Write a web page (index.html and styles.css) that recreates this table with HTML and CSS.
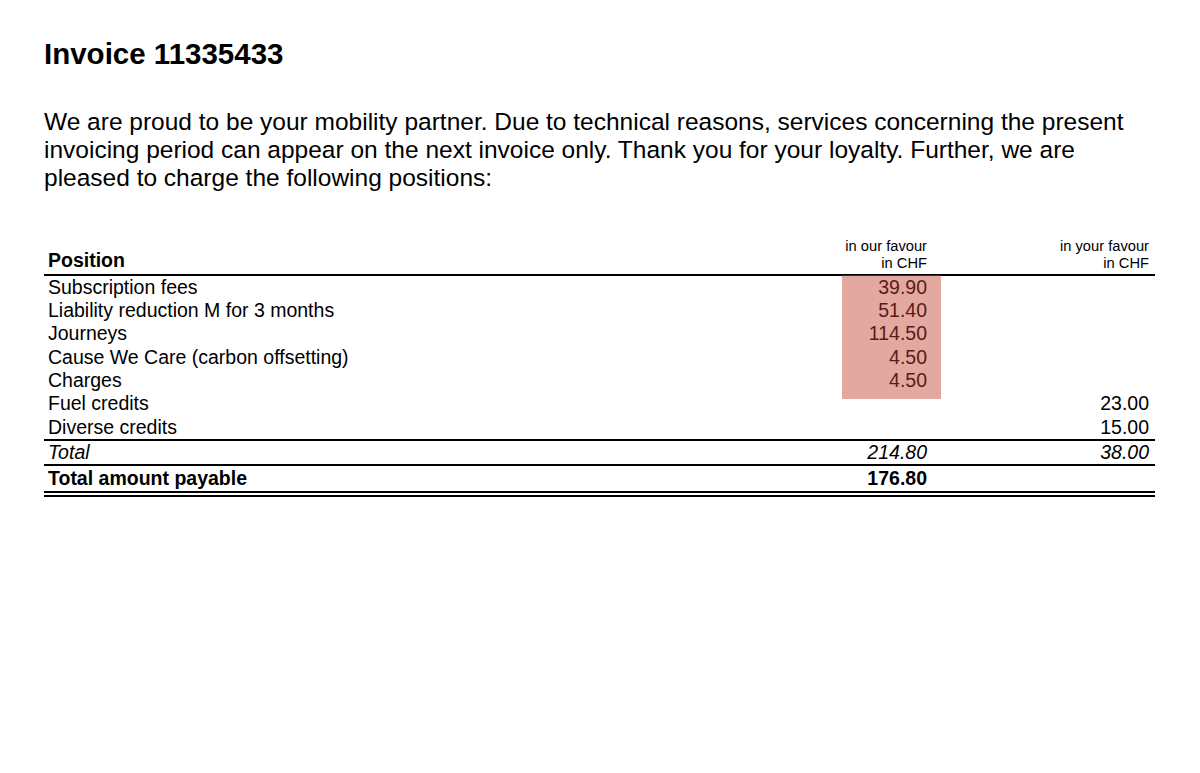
FILE: index.html
```html
<!DOCTYPE html>
<html lang="en">
<head>
<meta charset="utf-8">
<title>Invoice 11335433</title>
<link rel="stylesheet" href="styles.css">
</head>
<body>
<main class="page">
  <h1 class="title">Invoice 11335433</h1>
  <p class="intro">We are proud to be your mobility partner. Due to technical reasons, services concerning the present invoicing period can appear on the next invoice only. Thank you for your loyalty. Further, we are pleased to charge the following positions:</p>
  <table class="positions">
    <colgroup>
      <col class="c-pos">
      <col class="c-our">
      <col class="c-your">
    </colgroup>
    <thead>
      <tr>
        <th class="h-pos">Position</th>
        <th class="h-amt">in our favour<br>in CHF</th>
        <th class="h-amt">in your favour<br>in CHF</th>
      </tr>
    </thead>
    <tbody>
      <tr><td>Subscription fees</td><td class="amt hl-cell"><span class="highlight"></span>39.90</td><td class="amt"></td></tr>
      <tr><td>Liability reduction M for 3 months</td><td class="amt">51.40</td><td class="amt"></td></tr>
      <tr><td>Journeys</td><td class="amt">114.50</td><td class="amt"></td></tr>
      <tr><td>Cause We Care (carbon offsetting)</td><td class="amt">4.50</td><td class="amt"></td></tr>
      <tr><td>Charges</td><td class="amt">4.50</td><td class="amt"></td></tr>
      <tr><td>Fuel credits</td><td class="amt"></td><td class="amt">23.00</td></tr>
      <tr class="last-item"><td>Diverse credits</td><td class="amt"></td><td class="amt">15.00</td></tr>
      <tr class="subtotal"><td>Total</td><td class="amt">214.80</td><td class="amt">38.00</td></tr>
      <tr class="grand"><td>Total amount payable</td><td class="amt">176.80</td><td class="amt"></td></tr>
    </tbody>
  </table>
</main>
</body>
</html>
```

FILE: styles.css
```css
html, body {
  margin: 0;
  padding: 0;
  background: #ffffff;
}

body {
  font-family: "Liberation Sans", Arial, sans-serif;
  color: #000000;
}

.page {
  padding: 37px 45px 0 44px;
}

.title {
  margin: 0;
  font-size: 29.5px;
  line-height: 33px;
  font-weight: 700;
}

.intro {
  margin: 38px 0 0 0;
  font-size: 24.5px;
  line-height: 27.9px;
}

.positions {
  margin-top: 46px;
  width: 1111px;
  table-layout: fixed;
  border-collapse: collapse;
  border-spacing: 0;
  font-size: 19.5px;
  line-height: 23.3px;
}

.c-pos { width: 792px; }
.c-our { width: 97px; }
.c-your { width: 222px; }

.positions th,
.positions td {
  padding: 0 6px 0 4px;
  vertical-align: bottom;
  white-space: nowrap;
}

.positions thead th {
  border-bottom: 2px solid #000000;
  padding-bottom: 1px;
}

.h-pos {
  text-align: left;
  font-weight: 700;
}

.h-amt {
  text-align: right;
  font-weight: 400;
  font-size: 14.7px;
  line-height: 17.5px;
}

.amt {
  text-align: right;
}

.hl-cell {
  position: relative;
}

.highlight {
  position: absolute;
  top: -1px;
  left: 6px;
  right: -8px;
  height: 124px;
  background: rgba(193, 62, 44, 0.45);
  pointer-events: none;
}

.last-item td {
  border-bottom: 2px solid #000000;
}

.subtotal td {
  font-style: italic;
  border-bottom: 2px solid #000000;
}

.grand td {
  font-weight: 700;
  padding-top: 1px;
  padding-bottom: 1px;
  border-bottom: 6px double #000000;
}
```
